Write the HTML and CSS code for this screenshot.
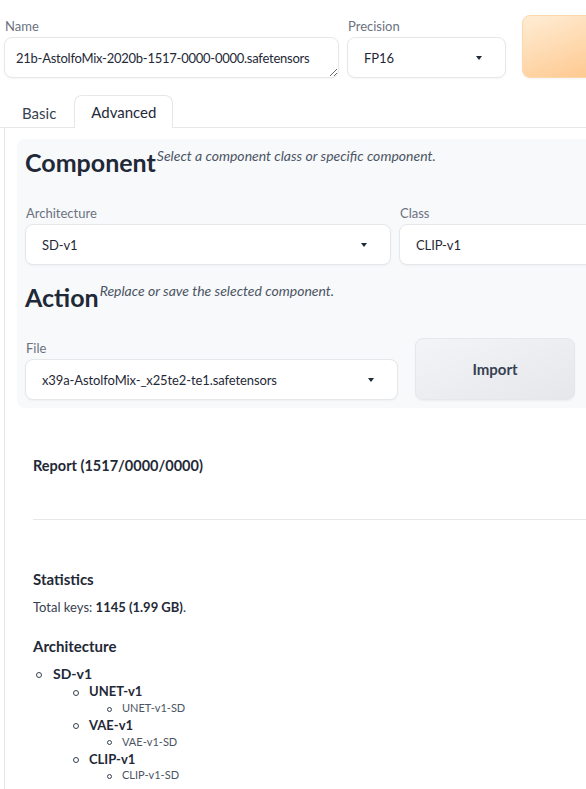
FILE: index.html
```html
<!DOCTYPE html>
<html lang="en">
<head>
<meta charset="utf-8">
<title>Model editor</title>
<link rel="stylesheet" href="styles.css">
</head>
<body>
<div class="app">
  <div class="top-row">
    <label class="field name-field">
      <span class="label">Name</span>
      <textarea class="textbox" rows="1" spellcheck="false">21b-AstolfoMix-2020b-1517-0000-0000.safetensors</textarea>
    </label>
    <div class="field precision-field">
      <span class="label">Precision</span>
      <div class="select"><span class="value">FP16</span><span class="caret"></span></div>
    </div>
    <button class="btn-primary" type="button"></button>
  </div>

  <div class="tabs">
    <div class="tab-nav">
      <button class="tab" type="button">Basic</button>
      <button class="tab selected" type="button">Advanced</button>
    </div>
    <div class="tab-panel">
      <div class="group">
        <h2 class="heading">Component<span class="note">Select a component class or specific component.</span></h2>
        <div class="row two-col">
          <div class="field">
            <span class="label">Architecture</span>
            <div class="select"><span class="value">SD-v1</span><span class="caret"></span></div>
          </div>
          <div class="field">
            <span class="label">Class</span>
            <div class="select"><span class="value">CLIP-v1</span><span class="caret"></span></div>
          </div>
        </div>
        <h2 class="heading action-heading">Action<span class="note">Replace or save the selected component.</span></h2>
        <div class="row action-row">
          <div class="field file-field">
            <span class="label">File</span>
            <div class="select"><span class="value">x39a-AstolfoMix-_x25te2-te1.safetensors</span><span class="caret"></span></div>
          </div>
          <button class="btn-secondary" type="button">Import</button>
        </div>
      </div>

      <div class="report">
        <h3 class="report-title">Report (1517/0000/0000)</h3>
        <hr class="divider">
        <h4 class="section-title stats-title">Statistics</h4>
        <p class="stats">Total keys: <strong>1145 (1.99 GB)</strong>.</p>
        <h4 class="section-title arch-title">Architecture</h4>
        <ul class="tree lvl1">
          <li>SD-v1
            <ul class="tree lvl2">
              <li>UNET-v1
                <ul class="tree lvl3"><li>UNET-v1-SD</li></ul>
              </li>
              <li>VAE-v1
                <ul class="tree lvl3"><li>VAE-v1-SD</li></ul>
              </li>
              <li>CLIP-v1
                <ul class="tree lvl3"><li>CLIP-v1-SD</li></ul>
              </li>
            </ul>
          </li>
        </ul>
      </div>
    </div>
  </div>
</div>
</body>
</html>
```

FILE: styles.css
```css
* { box-sizing: border-box; }

html, body {
  margin: 0;
  padding: 0;
  background: #ffffff;
  overflow: hidden;
}

body {
  font-family: Lato, "Noto Sans", sans-serif;
  color: #1f2937;
  font-size: 14px;
}

.app {
  width: 900px;
  padding: 15px 0 0 4px;
}

/* ---------- top row ---------- */
.top-row {
  display: flex;
  align-items: flex-start;
}

.field {
  display: flex;
  flex-direction: column;
}

.label {
  display: block;
  font-size: 13px;
  line-height: 22px;
  color: #6b7280;
  padding-left: 1px;
}

.name-field { width: 335px; }
.precision-field { width: 159px; margin-left: 8px; }

.textbox {
  display: block;
  width: 100%;
  height: 41px;
  margin: 0;
  padding: 11px 11px;
  font-family: Lato, "Noto Sans", sans-serif;
  font-size: 13px;
  letter-spacing: -0.25px;
  line-height: 18px;
  color: #1f2937;
  background: #ffffff;
  border: 1px solid #e5e7eb;
  border-radius: 8px;
  box-shadow: 0 1px 2px rgba(0, 0, 0, 0.04);
  resize: both;
  overflow: hidden;
  white-space: nowrap;
  outline: none;
}

.select {
  position: relative;
  display: flex;
  align-items: center;
  height: 41px;
  padding: 0 40px 0 16px;
  background: #ffffff;
  border: 1px solid #e5e7eb;
  border-radius: 8px;
  box-shadow: 0 1px 2px rgba(0, 0, 0, 0.04);
  font-size: 13px;
  letter-spacing: -0.1px;
  color: #1f2937;
  white-space: nowrap;
}

.caret {
  position: absolute;
  right: 23px;
  top: 18px;
  width: 0;
  height: 0;
  border-left: 3.5px solid transparent;
  border-right: 3.5px solid transparent;
  border-top: 4px solid #1f2937;
}

.btn-primary {
  width: 160px;
  height: 63px;
  margin-left: 16px;
  border: 1px solid #fed7aa;
  border-radius: 8px;
  background: linear-gradient(to bottom right, #ffedd5, #fdba74);
  box-shadow: 0 1px 2px rgba(0, 0, 0, 0.05);
}

/* ---------- tabs ---------- */
.tabs { margin-top: 18px; }

.tab-nav {
  display: flex;
  height: 32px;
  border-bottom: 1px solid #e5e7eb;
  margin-left: -4px;
  padding-left: 4px;
}

.tab {
  height: 32px;
  padding: 0 16px;
  margin: 0;
  font-family: Lato, "Noto Sans", sans-serif;
  font-size: 15px;
  color: #374151;
  background: transparent;
  border: 1px solid transparent;
  border-bottom: none;
  border-radius: 8px 8px 0 0;
  line-height: 30px;
}

.tab:first-child { padding: 0 17px; }

.tab.selected {
  background: #ffffff;
  border-color: #e5e7eb;
  height: 33px;
  margin-top: -1px;
  color: #1f2937;
}

.tab-panel {
  border-left: 1px solid #e5e7eb;
  padding: 11px 0 0 12px;
  height: 700px;
}

/* ---------- group ---------- */
.group {
  background: #f8f9fb;
  border-radius: 8px;
  padding: 7px 8px 8px 8px;
}

.heading {
  margin: 0;
  font-size: 25px;
  line-height: 32px;
  font-weight: 700;
  color: #1f2937;
}

.note {
  vertical-align: top;
  font-size: 14px;
  line-height: 20px;
  font-style: italic;
  font-weight: 400;
  color: #4b5563;
  margin-left: 1px;
}

.row { display: flex; }

.two-col {
  margin-top: 24px;
  gap: 8px;
}
.two-col .field { width: 366px; }

.action-heading { margin-top: 16px; }

.action-row {
  margin-top: 24px;
  gap: 17px;
}
.file-field { width: 373px; }

.btn-secondary {
  width: 160px;
  margin-top: 1px;
  border: 1px solid #e5e7eb;
  border-radius: 8px;
  background: linear-gradient(to bottom right, #f3f4f6, #e5e7eb);
  box-shadow: 0 1px 2px rgba(0, 0, 0, 0.05);
  font-family: Lato, "Noto Sans", sans-serif;
  font-size: 15px;
  font-weight: 700;
  color: #374151;
}

/* ---------- report ---------- */
.report {
  padding: 0 0 0 16px;
}

.report-title {
  margin: 48px 0 0;
  font-size: 14.5px;
  line-height: 20px;
  font-weight: 700;
  color: #1f2937;
}

.divider {
  margin: 43px 0 0;
  border: none;
  border-top: 1px solid #e5e7eb;
}

.section-title {
  margin: 0;
  font-size: 15px;
  line-height: 20px;
  font-weight: 700;
  color: #1f2937;
}
.stats-title { margin-top: 49px; }
.arch-title { margin-top: 19px; }

.stats {
  margin: 8px 0 0;
  font-size: 13px;
  line-height: 20px;
  color: #374151;
}
.stats strong { color: #1f2937; }

.tree {
  margin: 0;
  padding: 0;
  list-style: none;
}
.tree li::before {
  content: "";
  display: inline-block;
  box-sizing: border-box;
  width: 6px;
  height: 6px;
  border: 1.3px solid #374151;
  border-radius: 50%;
  vertical-align: middle;
}

.lvl1 { margin-top: 10px; padding-left: 20px; }
.lvl1 > li {
  font-size: 14px;
  line-height: 16.9px;
  font-weight: 700;
  color: #1f2937;
}
.lvl1 > li::before { margin-left: -17px; margin-right: 11px; }

.lvl2 { padding-left: 36px; }
.lvl2 > li {
  font-size: 13px;
  line-height: 16.9px;
  font-weight: 700;
  color: #1f2937;
}
.lvl2 > li::before { margin-left: -16px; margin-right: 10px; }

.lvl3 { padding-left: 33px; }
.lvl3 > li {
  font-size: 11px;
  line-height: 16.9px;
  font-weight: 400;
  color: #4b5563;
}
.lvl3 > li::before { width: 5px; height: 5px; margin-left: -15px; margin-right: 10px; }
```
